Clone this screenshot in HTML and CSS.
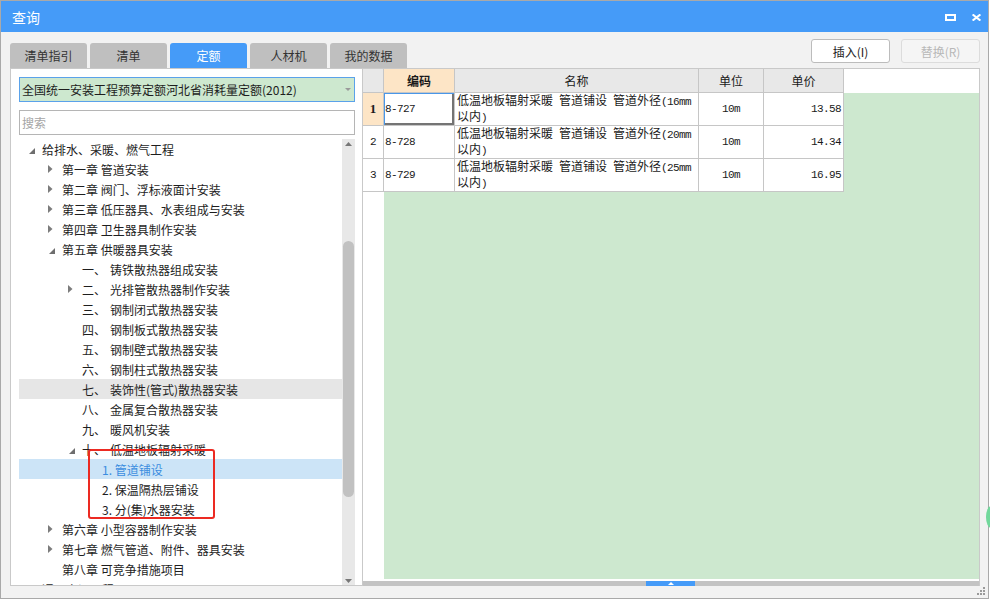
FILE: index.html
```html
<!DOCTYPE html>
<html lang="zh-CN">
<head>
<meta charset="utf-8">
<title>查询</title>
<link rel="stylesheet" href="styles.css">
</head>
<body>
<div class="window">
  <div class="titlebar">
    <span class="title">查询</span>
    <div class="winbtns">
      <svg class="ico" width="11" height="7" viewBox="0 0 11 7"><rect x="1" y="1" width="9" height="5" fill="none" stroke="#fff" stroke-width="2"/></svg>
      <svg class="ico" width="9" height="7" viewBox="0 0 9 7"><path d="M0.6 0.4 L8.4 6.6 M8.4 0.4 L0.6 6.6" stroke="#fff" stroke-width="2"/></svg>
    </div>
  </div>
  <div class="main">
    <div class="toolbar">
      <div class="tabs">
        <div class="tab">清单指引</div>
        <div class="tab">清单</div>
        <div class="tab active">定额</div>
        <div class="tab">人材机</div>
        <div class="tab">我的数据</div>
      </div>
      <div class="actions">
        <div class="btn">插入(I)</div>
        <div class="btn disabled">替换(R)</div>
      </div>
    </div>
    <div class="panels">
      <div class="left">
        <div class="combo"><span>全国统一安装工程预算定额河北省消耗量定额(2012)</span><svg class="combo-arrow" width="6" height="3" viewBox="0 0 6 3"><path d="M0 0H6L3 3Z" fill="#9a9a9a"/></svg></div>
        <div class="search">搜索</div>
        <div class="tree">
          <div class="tree-list">
            <div class="row l0"><span class="tog"><svg class="tri-e" width="6" height="6" viewBox="0 0 6 6"><path d="M6 0V6H0Z" fill="#6e6e6e"/></svg></span>给排水、采暖、燃气工程</div>
            <div class="row l1"><span class="tog"><svg class="tri-c" width="5" height="8" viewBox="0 0 5 8"><path d="M0 0L4.5 4L0 8Z" fill="#7c7c7c"/></svg></span>第一章 管道安装</div>
            <div class="row l1"><span class="tog"><svg class="tri-c" width="5" height="8" viewBox="0 0 5 8"><path d="M0 0L4.5 4L0 8Z" fill="#7c7c7c"/></svg></span>第二章 阀门、浮标液面计安装</div>
            <div class="row l1"><span class="tog"><svg class="tri-c" width="5" height="8" viewBox="0 0 5 8"><path d="M0 0L4.5 4L0 8Z" fill="#7c7c7c"/></svg></span>第三章 低压器具、水表组成与安装</div>
            <div class="row l1"><span class="tog"><svg class="tri-c" width="5" height="8" viewBox="0 0 5 8"><path d="M0 0L4.5 4L0 8Z" fill="#7c7c7c"/></svg></span>第四章 卫生器具制作安装</div>
            <div class="row l1"><span class="tog"><svg class="tri-e" width="6" height="6" viewBox="0 0 6 6"><path d="M6 0V6H0Z" fill="#6e6e6e"/></svg></span>第五章 供暖器具安装</div>
            <div class="row l2"><span class="tog"></span><span class="num">一、</span>铸铁散热器组成安装</div>
            <div class="row l2"><span class="tog"><svg class="tri-c" width="5" height="8" viewBox="0 0 5 8"><path d="M0 0L4.5 4L0 8Z" fill="#7c7c7c"/></svg></span><span class="num">二、</span>光排管散热器制作安装</div>
            <div class="row l2"><span class="tog"></span><span class="num">三、</span>钢制闭式散热器安装</div>
            <div class="row l2"><span class="tog"></span><span class="num">四、</span>钢制板式散热器安装</div>
            <div class="row l2"><span class="tog"></span><span class="num">五、</span>钢制壁式散热器安装</div>
            <div class="row l2"><span class="tog"></span><span class="num">六、</span>钢制柱式散热器安装</div>
            <div class="row l2 hover"><span class="tog"></span><span class="num">七、</span>装饰性(管式)散热器安装</div>
            <div class="row l2"><span class="tog"></span><span class="num">八、</span>金属复合散热器安装</div>
            <div class="row l2"><span class="tog"></span><span class="num">九、</span>暖风机安装</div>
            <div class="row l2"><span class="tog"><svg class="tri-e" width="6" height="6" viewBox="0 0 6 6"><path d="M6 0V6H0Z" fill="#6e6e6e"/></svg></span><span class="num">十、</span>低温地板辐射采暖</div>
            <div class="row l3 sel"><span class="tog"></span>1. 管道铺设</div>
            <div class="row l3"><span class="tog"></span>2. 保温隔热层铺设</div>
            <div class="row l3"><span class="tog"></span>3. 分(集)水器安装</div>
            <div class="row l1"><span class="tog"><svg class="tri-c" width="5" height="8" viewBox="0 0 5 8"><path d="M0 0L4.5 4L0 8Z" fill="#7c7c7c"/></svg></span>第六章 小型容器制作安装</div>
            <div class="row l1"><span class="tog"><svg class="tri-c" width="5" height="8" viewBox="0 0 5 8"><path d="M0 0L4.5 4L0 8Z" fill="#7c7c7c"/></svg></span>第七章 燃气管道、附件、器具安装</div>
            <div class="row l1"><span class="tog"></span>第八章 可竞争措施项目</div>
            <div class="row l0"><span class="tog"></span>通风空调工程</div>
            <div class="mark"></div>
          </div>
          <div class="vscroll">
            <svg class="arr-up" width="7" height="4" viewBox="0 0 7 4"><path d="M3.5 0L7 4H0Z" fill="#777"/></svg>
            <div class="vthumb"></div>
            <svg class="arr-down" width="7" height="4" viewBox="0 0 7 4"><path d="M0 0H7L3.5 4Z" fill="#777"/></svg>
          </div>
        </div>
      </div>
      <div class="right">
        <div class="grid">
          <div class="c h"></div>
          <div class="c h code">编码</div>
          <div class="c h">名称</div>
          <div class="c h">单位</div>
          <div class="c h">单价</div>
          <div class="blank"></div>

          <div class="c rn cur">1</div>
          <div class="c cd focus"><span class="mono">8-727</span></div>
          <div class="c nm"><span class="nm-text">低温地板辐射采暖<span class="mono"> </span>管道铺设<span class="mono"> </span>管道外径<span class="mono">(16mm</span><br>以内<span class="mono">)</span></span></div>
          <div class="c un"><span class="mono">10m</span></div>
          <div class="c pr"><span class="mono">13.58</span></div>

          <div class="c rn"><span class="mono">2</span></div>
          <div class="c cd"><span class="mono">8-728</span></div>
          <div class="c nm"><span class="nm-text">低温地板辐射采暖<span class="mono"> </span>管道铺设<span class="mono"> </span>管道外径<span class="mono">(20mm</span><br>以内<span class="mono">)</span></span></div>
          <div class="c un"><span class="mono">10m</span></div>
          <div class="c pr"><span class="mono">14.34</span></div>

          <div class="c rn"><span class="mono">3</span></div>
          <div class="c cd"><span class="mono">8-729</span></div>
          <div class="c nm"><span class="nm-text">低温地板辐射采暖<span class="mono"> </span>管道铺设<span class="mono"> </span>管道外径<span class="mono">(25mm</span><br>以内<span class="mono">)</span></span></div>
          <div class="c un"><span class="mono">10m</span></div>
          <div class="c pr"><span class="mono">16.95</span></div>

          <div class="green-right"></div>
          <div class="rn-rest"></div>
          <div class="green-bottom"></div>
        </div>
        <div class="hgap"></div>
        <div class="hscroll"><div class="hthumb"><svg class="hthumb-arrow" width="6" height="3" viewBox="0 0 6 3"><path d="M3 0L6 3H0Z" fill="#fff"/></svg></div></div>
      </div>
    </div>
  </div>
  <div class="bump"></div>
  <svg class="grip" width="9" height="9" viewBox="0 0 9 9">
    <rect x="6" y="0" width="2" height="2" fill="#9a9a9a"/>
    <rect x="3" y="3" width="2" height="2" fill="#9a9a9a"/>
    <rect x="6" y="3" width="2" height="2" fill="#9a9a9a"/>
    <rect x="0" y="6" width="2" height="2" fill="#9a9a9a"/>
    <rect x="3" y="6" width="2" height="2" fill="#9a9a9a"/>
    <rect x="6" y="6" width="2" height="2" fill="#9a9a9a"/>
  </svg>
</div>
</body>
</html>
```

FILE: styles.css
```css
* { box-sizing: border-box; margin: 0; padding: 0; }
html, body { width: 990px; height: 600px; overflow: hidden; background: #ffffff; }
body {
  font-family: "Noto Sans CJK SC", "Microsoft YaHei", sans-serif;
  font-size: 12px;
  color: #222;
}
svg { display: block; flex: none; }

.window {
  position: relative;
  width: 989px;
  height: 599px;
  border: 1px solid #a9a9a9;
  background: #f2f2f2;
  display: flex;
  flex-direction: column;
}

.titlebar {
  height: 31px;
  flex: none;
  background: #459bf8;
  color: #fff;
  display: flex;
  align-items: center;
  justify-content: space-between;
  padding: 0 7px 0 11px;
}
.title { font-size: 14px; line-height: 20px; }
.winbtns { display: flex; align-items: center; gap: 16px; padding-top: 1px; }

.main {
  flex: none;
  display: flex;
  flex-direction: column;
  padding: 0 8px 0 9px;
}

.toolbar {
  height: 36px;
  display: flex;
  justify-content: space-between;
}
.tabs { display: flex; gap: 3px; align-self: flex-end; }
.tab {
  width: 77px;
  height: 25px;
  background: #bfbfbf;
  border-radius: 3px 3px 0 0;
  color: #333;
  display: flex;
  align-items: center;
  justify-content: center;
  line-height: 1;
}
.tab.active { background: #459bf8; color: #fff; }

.actions { display: flex; gap: 11px; padding-top: 7px; }
.btn {
  width: 79px;
  height: 24px;
  background: #fff;
  border: 1px solid #bcbcbc;
  border-radius: 3px;
  color: #222;
  display: flex;
  align-items: center;
  justify-content: center;
}
.btn.disabled { background: #f5f5f5; border-color: #dcdcdc; color: #b8b8b8; }

.panels { height: 518px; display: flex; }

.left {
  width: 352px;
  flex: none;
  background: #fff;
  border: 1px solid #c9c9c9;
  border-right: none;
  padding: 8px 7px 0 8px;
  display: flex;
  flex-direction: column;
}
.combo {
  height: 25px;
  flex: none;
  background: #cde8cf;
  border: 1px solid #5aa2ea;
  display: flex;
  align-items: center;
  justify-content: space-between;
  padding: 0 3px 0 2px;
  color: #1d1d1d;
}
.search {
  height: 25px;
  flex: none;
  margin-top: 8px;
  border: 1px solid #b5b5b5;
  padding-left: 2px;
  color: #a5a5a5;
  display: flex;
  align-items: center;
}

.tree {
  flex: 1;
  min-height: 0;
  margin-top: 4px;
  display: flex;
}
.tree-list {
  flex: 1;
  position: relative;
  overflow: hidden;
}
.row {
  height: 20px;
  display: flex;
  align-items: center;
  white-space: nowrap;
  color: #1e1e1e;
}
.row.l0 { padding-left: 9px; }
.row.l1 { padding-left: 29px; }
.row.l2 { padding-left: 49px; }
.row.l3 { padding-left: 69px; }
.row.hover { background: #e6e6e6; }
.row.sel { background: #cce4f7; color: #3b8de0; }
.num { display: inline-block; width: 28px; }

.tog {
  width: 14px;
  height: 20px;
  flex: none;
  display: flex;
  align-items: center;
}
.tri-e { margin-left: 1px; margin-top: 3px; }

.mark {
  position: absolute;
  left: 69px;
  top: 310px;
  width: 127px;
  height: 70px;
  border: 2px solid #ec2a22;
  border-radius: 3px;
}

.vscroll {
  width: 13px;
  flex: none;
  background: #e8e8e8;
  display: flex;
  flex-direction: column;
  align-items: center;
}
.arr-up { margin-top: 3px; }
.vthumb {
  margin-top: 95px;
  width: 11px;
  height: 256px;
  border-radius: 6px;
  background: #c1c1c1;
}
.arr-down { margin-top: auto; margin-bottom: 2px; }

.right {
  flex: 1;
  background: #fff;
  border: 1px solid #c9c9c9;
  border-bottom: none;
  display: flex;
  flex-direction: column;
}
.grid {
  height: 510px;
  flex: none;
  display: grid;
  grid-template-columns: 21px 71px 244px 65px 80px 1fr;
  grid-template-rows: 24px 33px 33px 33px 1fr;
}
.c {
  border-right: 1px solid #c6c6c6;
  border-bottom: 1px solid #c6c6c6;
  display: flex;
  align-items: center;
  white-space: nowrap;
  color: #1a1a1a;
}
.h { background: #e8e8e8; justify-content: center; }
.h.code { background: #fde5c6; font-weight: bold; }
.blank { background: #fff; }
.rn { justify-content: center; background: #fff; }
.rn.cur {
  background: #fde5c6;
  font-family: "Liberation Serif", serif;
  font-weight: bold;
  font-size: 13px;
}
.cd { padding-left: 1px; background: #fff; }
.cd.focus { box-shadow: inset 1px 1px 0 #4a97e8, inset -2px -2px 0 #747474; }
.nm { padding-left: 2px; background: #fff; }
.nm-text { display: block; line-height: 13px; white-space: pre; }
.un { justify-content: center; background: #fff; }
.pr { justify-content: flex-end; padding-right: 2px; background: #fff; }
.mono {
  font-family: "Liberation Mono", "DejaVu Sans Mono", monospace;
  font-size: 11px;
  letter-spacing: -0.6px;
}
.green-right { grid-column: 6; grid-row: 2 / 6; background: #cde8cf; }
.rn-rest { grid-column: 1; grid-row: 5; background: #fff; }
.green-bottom { grid-column: 2 / 6; grid-row: 5; background: #cde8cf; }

.hgap { height: 2px; flex: none; background: #fff; }
.hscroll {
  height: 5px;
  flex: none;
  background: #c3c3c3;
  display: flex;
}
.hthumb {
  margin-left: 283px;
  width: 49px;
  background: #459bf8;
  display: flex;
  justify-content: center;
  align-items: flex-end;
  padding-bottom: 1px;
}

.bump {
  position: absolute;
  left: 985px;
  top: 505px;
  width: 10px;
  height: 22px;
  border-radius: 50%;
  background: #72d89c;
}
.grip {
  position: absolute;
  right: 2px;
  bottom: 2px;
}
```
